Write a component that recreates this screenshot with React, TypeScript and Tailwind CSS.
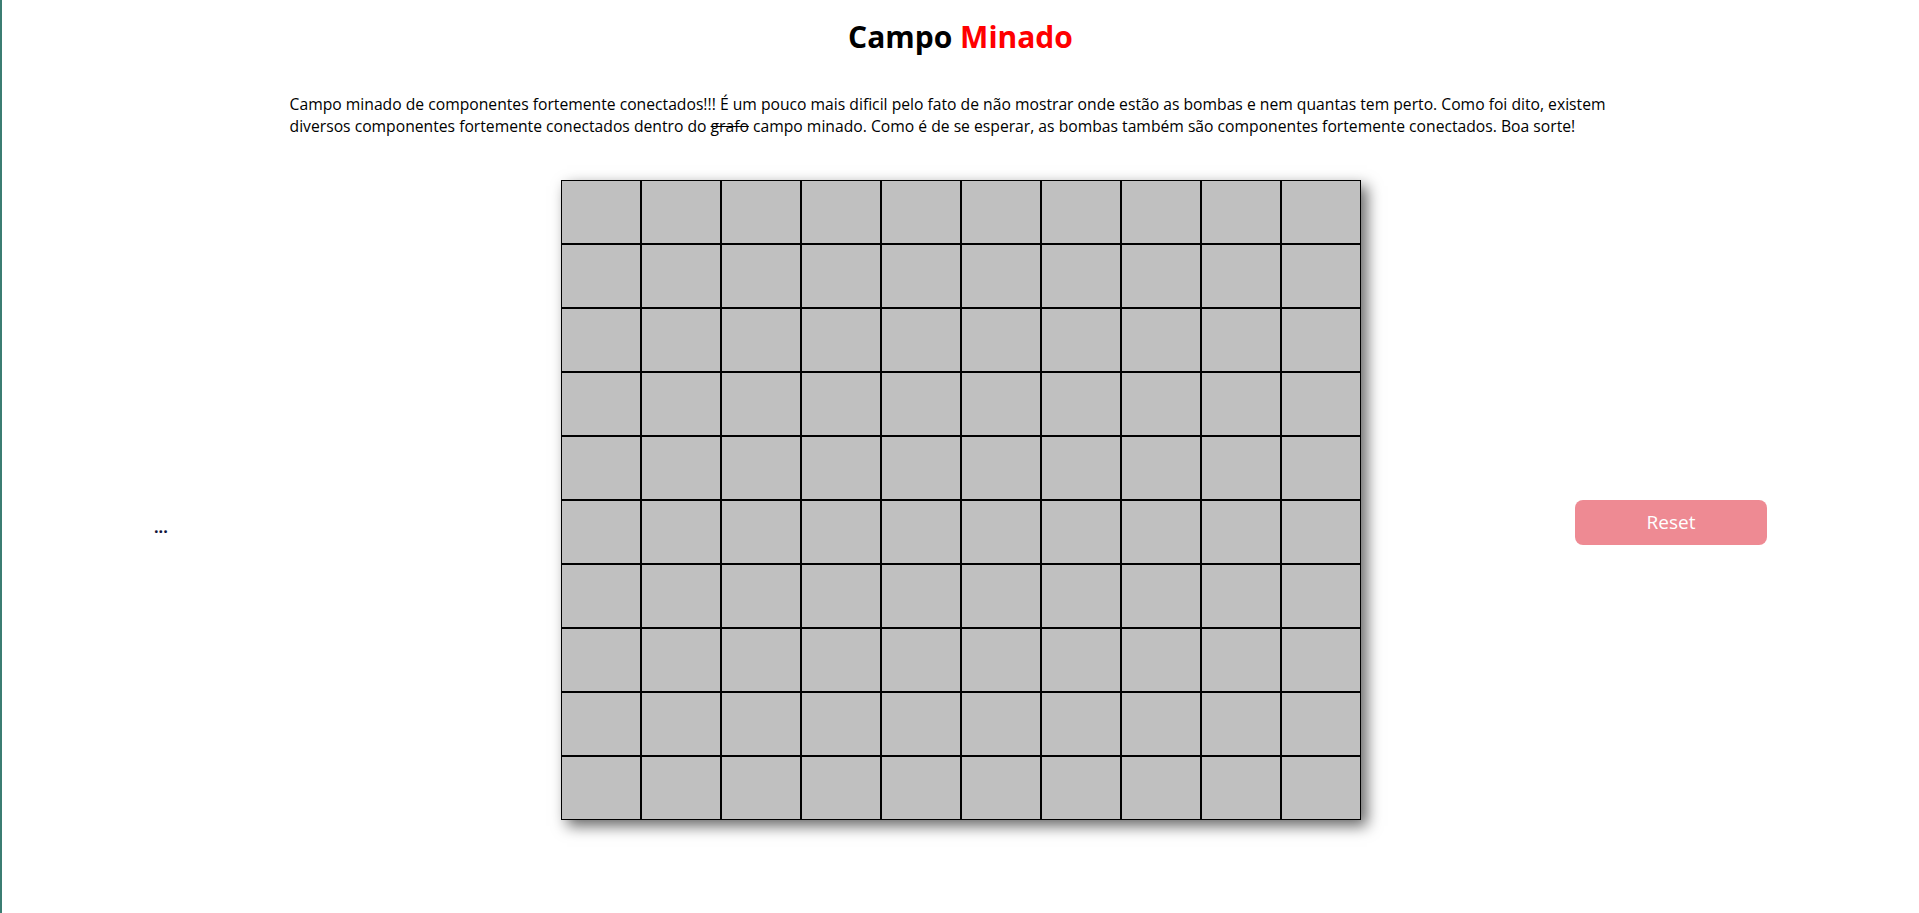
const ROWS = 10;
const COLS = 10;

function Board() {
  const cells = Array.from({ length: ROWS * COLS }, (_, i) => i);

  return (
    <div className="grid grid-cols-10 shadow-[6px_6px_14px_rgba(0,0,0,0.6)]">
      {cells.map((i) => (
        <div
          key={i}
          className="h-[64px] w-[80px] border border-black bg-[#c0c0c0]"
        />
      ))}
    </div>
  );
}

export default function App() {
  return (
    <div className="min-h-screen border-l-2 border-[#3b7d72] bg-white font-['Open_Sans','Noto_Sans',sans-serif] text-black">
      {/* Header */}
      <h1 className="pt-[16px] text-center text-[30px] font-bold leading-[42px]">
        Campo <span className="text-[#ff0000]">Minado</span>
      </h1>

      <p className="mx-auto mt-[36px] w-[70%] text-[15.7px] leading-[21.5px]">
        Campo minado de componentes fortemente conectados!!! É um pouco mais
        dificil pelo fato de não mostrar onde estão as bombas e nem quantas tem
        perto. Como foi dito, existem diversos componentes fortemente
        conectados dentro do <s>grafo</s> campo minado. Como é de se esperar, as
        bombas também são componentes fortemente conectados. Boa sorte!
      </p>

      {/* Game row */}
      <div className="mt-[43px] flex items-start justify-between px-[152px]">
        <div className="w-[192px]">
          <span className="mt-[337px] block text-[16px] font-bold leading-[20px] text-[#10123a]">
            ...
          </span>
        </div>

        <Board />

        <div className="flex w-[192px] justify-end">
          <button className="mt-[320px] h-[45px] w-[192px] rounded-lg bg-[#ee8a93] text-[19px] text-white">
            Reset
          </button>
        </div>
      </div>
    </div>
  );
}
